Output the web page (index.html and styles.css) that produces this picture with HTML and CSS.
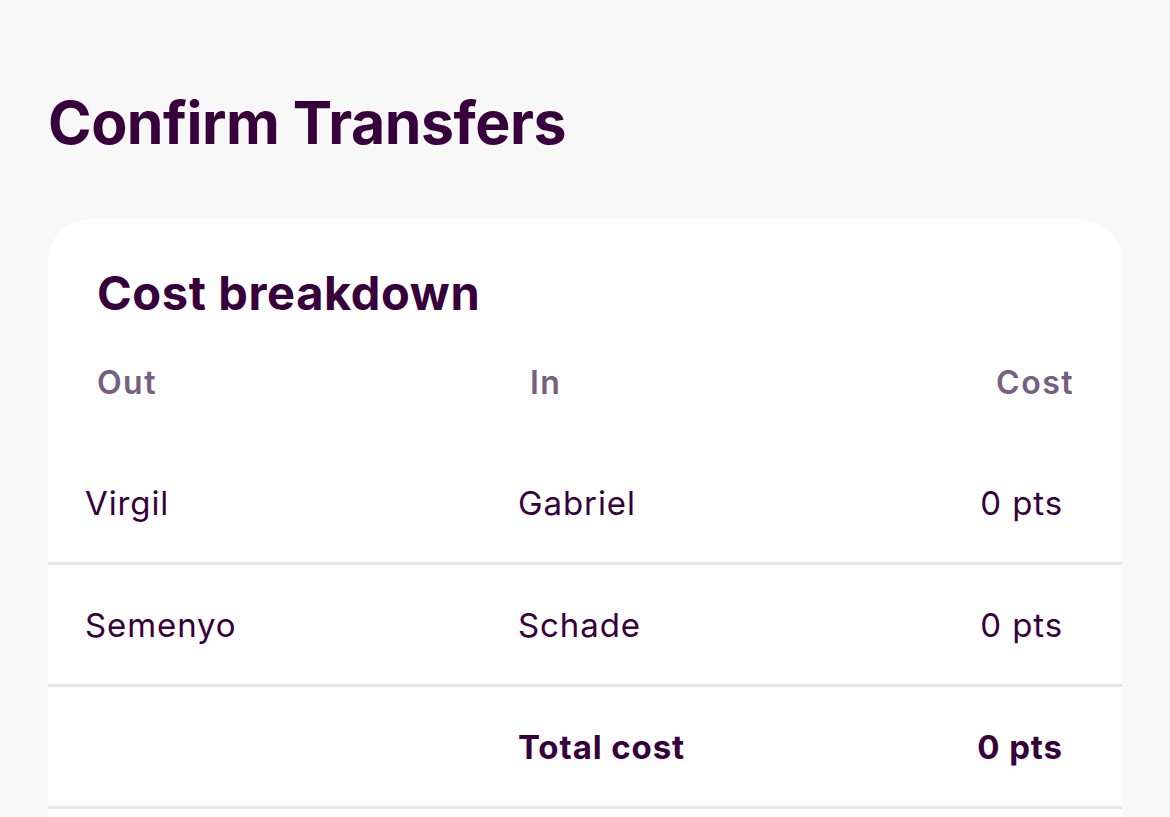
FILE: index.html
```html
<!DOCTYPE html>
<html lang="en">
<head>
  <meta charset="UTF-8">
  <title>Confirm Transfers</title>
  <link rel="stylesheet" href="styles.css">
</head>
<body>

  <h1 class="page-title">Confirm Transfers</h1>

  <div class="cost-card">
    <h3>Cost breakdown</h3>

    <div class="cost-head">
      <span>Out</span>
      <span>In</span>
      <span class="cost-col">Cost</span>
    </div>

    <div class="cost-row">
      <span>Virgil</span>
      <span>Gabriel</span>
      <span class="cost-col">0 pts</span>
    </div>
    <div class="cost-row">
      <span>Semenyo</span>
      <span>Schade</span>
      <span class="cost-col">0 pts</span>
    </div>
    <div class="cost-row total-row">
      <span></span>
      <span>Total cost</span>
      <span class="cost-col">0 pts</span>
    </div>
  </div>

</body>
</html>
```

FILE: styles.css
```css
body {
  margin: 0;
  padding: 87px 48px 0 48px;
  background-color: #f8f8f9;
  font-family: Inter, Lato, sans-serif;
  color: #37003c;
}
.page-title {
  margin: 0;
  font-size: 59px;
  line-height: 72px;
  font-weight: 700;
  letter-spacing: -0.5px;
  color: #37003c;
}
.cost-card {
  background: #fff;
  margin-top: 60px;
  padding: 45px 0 40px 0;
  border-radius: 42px 42px 0 0;
  width: 1074px;
}
.cost-card h3 {
  margin: 0;
  padding: 0 49px;
  font-size: 47px;
  line-height: 58px;
  font-weight: 700;
  letter-spacing: 0.6px;
}
.cost-head,
.cost-row {
  display: grid;
  grid-template-columns: 433px 1fr auto;
  align-items: center;
}
.cost-head {
  height: 121px;
  padding: 0 48px 0 49px;
  font-size: 32px;
  font-weight: 600;
  letter-spacing: 1.5px;
  color: #765f80;
}
.cost-row {
  height: 119px;
  padding: 0 59px 0 37px;
  font-size: 33px;
  font-weight: 400;
  letter-spacing: 0.9px;
  border-bottom: 3px solid #e7e5ea;
}
.cost-col {
  text-align: right;
}
.total-row {
  font-weight: 700;
}
```
